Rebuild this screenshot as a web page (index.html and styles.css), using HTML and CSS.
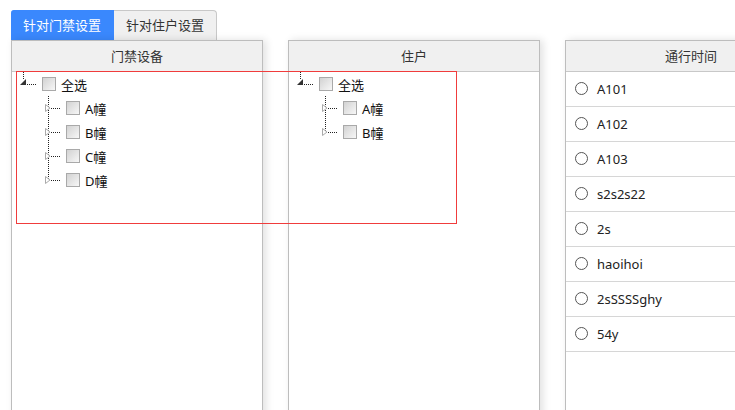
FILE: index.html
```html
<!DOCTYPE html>
<html lang="zh-CN">
<head>
    <meta charset="UTF-8">
    <meta name="viewport" content="width=device-width, initial-scale=1.0">
    <title>门禁设置</title>
    <link rel="stylesheet" href="styles.css">
</head>
<body>
    <div class="page">
        <div class="tabs">
            <div class="tab active">针对门禁设置</div>
            <div class="tab">针对住户设置</div>
        </div>

        <div class="panels">
            <!-- 门禁设备 -->
            <div class="panel">
                <div class="panel-header">门禁设备</div>
                <ul class="tree">
                    <li class="node root">
                        <svg class="switch" width="24" height="24" viewBox="0 0 24 24">
                            <line x1="7.5" y1="0" x2="7.5" y2="8" stroke="#222" stroke-dasharray="1 1"/>
                            <polygon points="4,13 10,13 10,7" fill="#333"/>
                            <line x1="11" y1="12.5" x2="21" y2="12.5" stroke="#222" stroke-dasharray="1 1"/>
                        </svg>
                        <span class="check"></span><span class="label">全选</span>
                    </li>
                    <li class="node child">
                        <svg class="switch" width="24" height="24" viewBox="0 0 24 24">
                            <line x1="8.5" y1="0" x2="8.5" y2="24" stroke="#222" stroke-dasharray="1 1"/>
                            <polygon points="5.5,8.5 5.5,15.5 10,12" fill="#fff" stroke="#aaa"/>
                            <line x1="11" y1="12.5" x2="21" y2="12.5" stroke="#222" stroke-dasharray="1 1"/>
                        </svg>
                        <span class="check"></span><span class="label">A幢</span>
                    </li>
                    <li class="node child">
                        <svg class="switch" width="24" height="24" viewBox="0 0 24 24">
                            <line x1="8.5" y1="0" x2="8.5" y2="24" stroke="#222" stroke-dasharray="1 1"/>
                            <polygon points="5.5,8.5 5.5,15.5 10,12" fill="#fff" stroke="#aaa"/>
                            <line x1="11" y1="12.5" x2="21" y2="12.5" stroke="#222" stroke-dasharray="1 1"/>
                        </svg>
                        <span class="check"></span><span class="label">B幢</span>
                    </li>
                    <li class="node child">
                        <svg class="switch" width="24" height="24" viewBox="0 0 24 24">
                            <line x1="8.5" y1="0" x2="8.5" y2="24" stroke="#222" stroke-dasharray="1 1"/>
                            <polygon points="5.5,8.5 5.5,15.5 10,12" fill="#fff" stroke="#aaa"/>
                            <line x1="11" y1="12.5" x2="21" y2="12.5" stroke="#222" stroke-dasharray="1 1"/>
                        </svg>
                        <span class="check"></span><span class="label">C幢</span>
                    </li>
                    <li class="node child">
                        <svg class="switch" width="24" height="24" viewBox="0 0 24 24">
                            <line x1="8.5" y1="0" x2="8.5" y2="11" stroke="#222" stroke-dasharray="1 1"/>
                            <polygon points="5.5,8.5 5.5,15.5 10,12" fill="#fff" stroke="#aaa"/>
                            <line x1="11" y1="12.5" x2="21" y2="12.5" stroke="#222" stroke-dasharray="1 1"/>
                        </svg>
                        <span class="check"></span><span class="label">D幢</span>
                    </li>
                </ul>
            </div>

            <!-- 住户 -->
            <div class="panel">
                <div class="panel-header">住户</div>
                <ul class="tree">
                    <li class="node root">
                        <svg class="switch" width="24" height="24" viewBox="0 0 24 24">
                            <line x1="7.5" y1="0" x2="7.5" y2="8" stroke="#222" stroke-dasharray="1 1"/>
                            <polygon points="4,13 10,13 10,7" fill="#333"/>
                            <line x1="11" y1="12.5" x2="21" y2="12.5" stroke="#222" stroke-dasharray="1 1"/>
                        </svg>
                        <span class="check"></span><span class="label">全选</span>
                    </li>
                    <li class="node child">
                        <svg class="switch" width="24" height="24" viewBox="0 0 24 24">
                            <line x1="8.5" y1="0" x2="8.5" y2="24" stroke="#222" stroke-dasharray="1 1"/>
                            <polygon points="5.5,8.5 5.5,15.5 10,12" fill="#fff" stroke="#aaa"/>
                            <line x1="11" y1="12.5" x2="21" y2="12.5" stroke="#222" stroke-dasharray="1 1"/>
                        </svg>
                        <span class="check"></span><span class="label">A幢</span>
                    </li>
                    <li class="node child">
                        <svg class="switch" width="24" height="24" viewBox="0 0 24 24">
                            <line x1="8.5" y1="0" x2="8.5" y2="11" stroke="#222" stroke-dasharray="1 1"/>
                            <polygon points="5.5,8.5 5.5,15.5 10,12" fill="#fff" stroke="#aaa"/>
                            <line x1="11" y1="12.5" x2="21" y2="12.5" stroke="#222" stroke-dasharray="1 1"/>
                        </svg>
                        <span class="check"></span><span class="label">B幢</span>
                    </li>
                </ul>
            </div>

            <!-- 通行时间 -->
            <div class="panel">
                <div class="panel-header">通行时间</div>
                <ul class="time-list">
                    <li class="time-row"><span class="radio"></span>A101</li>
                    <li class="time-row"><span class="radio"></span>A102</li>
                    <li class="time-row"><span class="radio"></span>A103</li>
                    <li class="time-row"><span class="radio"></span>s2s2s22</li>
                    <li class="time-row"><span class="radio"></span>2s</li>
                    <li class="time-row"><span class="radio"></span>haoihoi</li>
                    <li class="time-row"><span class="radio"></span>2sSSSSghy</li>
                    <li class="time-row"><span class="radio"></span>54y</li>
                </ul>
            </div>

            <!-- selection highlight -->
            <div class="selection-box"></div>
        </div>
    </div>
</body>
</html>
```

FILE: styles.css
```css
body {
    font-family: "Noto Sans", "Noto Sans CJK SC", sans-serif;
    font-size: 13px;
    color: #333;
    background-color: #fff;
    margin: 0;
    padding: 0;
    overflow: hidden;
}
.page {
    padding: 10px 0 0 11px;
}
/* Tabs */
.tabs {
    display: flex;
}
.tab {
    width: 103px;
    height: 30px;
    box-sizing: border-box;
    line-height: 28px;
    text-align: center;
    background-color: #f0f0f0;
    border: 1px solid #c8c8c8;
    border-bottom: none;
    border-left: none;
    border-radius: 0 4px 0 0;
    color: #333;
}
.tab.active {
    background-color: #3a88fd;
    border-color: #3a88fd;
    border-radius: 3px 0 0 0;
    color: #fff;
}
/* Panels */
.panels {
    position: relative;
    display: flex;
    gap: 25px;
}
.panel {
    width: 252px;
    flex-shrink: 0;
    height: 400px;
    box-sizing: border-box;
    border: 1px solid #bdbdbd;
    background-color: #fff;
    box-shadow: 3px 0 8px rgba(0, 0, 0, 0.12);
}
.panel-header {
    height: 30px;
    line-height: 30px;
    text-align: center;
    background-color: #f0f0f0;
    border-bottom: 1px solid #c8c8c8;
    color: #333;
}
/* Tree */
.tree {
    list-style: none;
    margin: 0;
    padding: 0 0 0 4px;
}
.node {
    display: flex;
    align-items: center;
    height: 24px;
    color: #111;
}
.node.child {
    padding-left: 24px;
}
.switch {
    flex-shrink: 0;
    display: block;
}
.check {
    width: 14px;
    height: 14px;
    box-sizing: border-box;
    margin-left: 2px;
    border: 1px solid #a9a9a9;
    background: linear-gradient(135deg, #d2d2d2, #f7f7f7);
}
.label {
    margin-left: 5px;
}
/* Time list */
.time-list {
    list-style: none;
    margin: 0;
    padding: 0;
}
.time-row {
    display: flex;
    align-items: center;
    height: 34px;
    border-bottom: 1px solid #d6d6d6;
    padding-left: 9px;
    color: #222;
}
.radio {
    width: 13px;
    height: 13px;
    box-sizing: border-box;
    border: 1.5px solid #555;
    border-radius: 50%;
    margin-right: 9px;
    margin-top: -2px;
}
/* Red selection rectangle overlaying the trees */
.selection-box {
    position: absolute;
    left: 5px;
    top: 31px;
    width: 441px;
    height: 153px;
    box-sizing: border-box;
    border: 1px solid #f03c3c;
    pointer-events: none;
}
```
